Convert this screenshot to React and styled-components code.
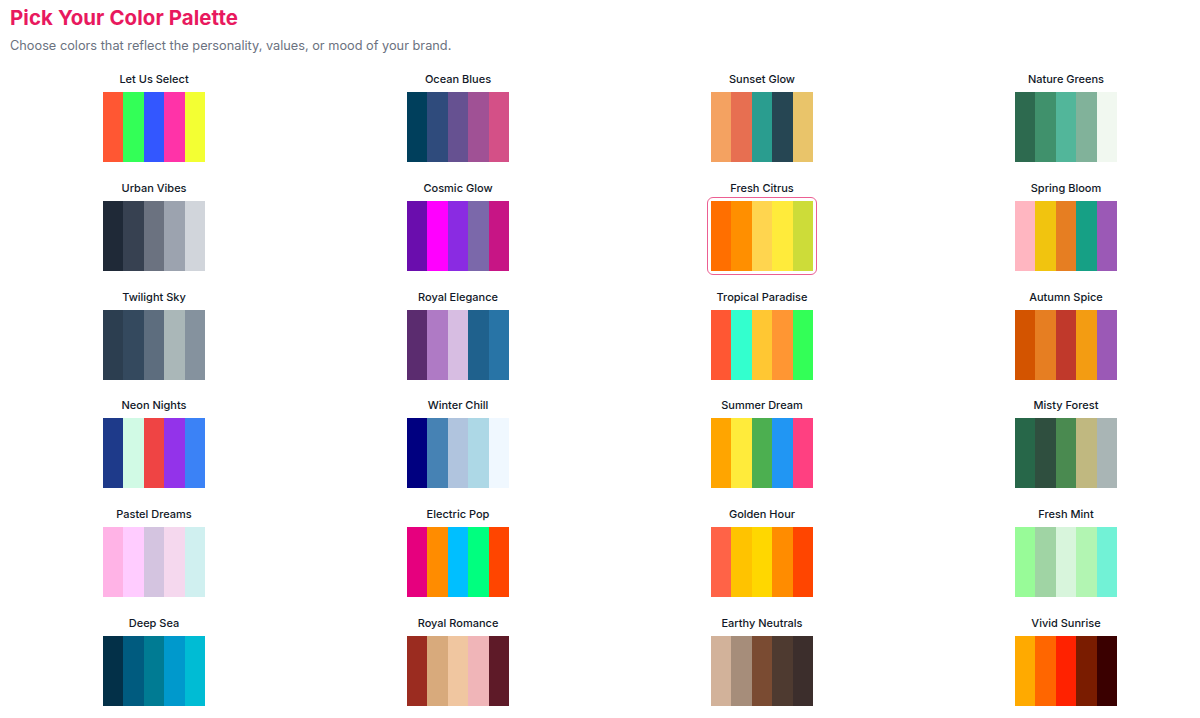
import React, { useState } from "react";
import styled, { createGlobalStyle } from "styled-components";

const GlobalStyle = createGlobalStyle`
  html, body { margin: 0; padding: 0; background: #ffffff; overflow-x: hidden; }
  body { font-family: Inter, "Noto Sans", "Liberation Sans", sans-serif; }
  * { box-sizing: border-box; }
`;

const palettes = [
  { name: "Let Us Select", colors: ["#FF5733", "#33FF57", "#3357FF", "#FF33A8", "#F3FF33"] },
  { name: "Ocean Blues", colors: ["#003F5C", "#2F4B7C", "#665191", "#A05195", "#D45087"] },
  { name: "Sunset Glow", colors: ["#F4A261", "#E76F51", "#2A9D8F", "#264653", "#E9C46A"] },
  { name: "Nature Greens", colors: ["#2D6A4F", "#40916C", "#52B69A", "#81B29A", "#F1F8F0"] },
  { name: "Urban Vibes", colors: ["#1F2937", "#374151", "#6B7280", "#9CA3AF", "#D1D5DB"] },
  { name: "Cosmic Glow", colors: ["#6A0DAD", "#FF00FF", "#8A2BE2", "#7B68AA", "#C71585"] },
  { name: "Fresh Citrus", colors: ["#FF6F00", "#FF8F00", "#FFD54F", "#FFEB3B", "#CDDC39"] },
  { name: "Spring Bloom", colors: ["#FFB6C1", "#F1C40F", "#E67E22", "#16A085", "#9B59B6"] },
  { name: "Twilight Sky", colors: ["#2C3E50", "#34495E", "#5D6D7E", "#AAB7B8", "#85929E"] },
  { name: "Royal Elegance", colors: ["#5B2C6F", "#AF7AC5", "#D7BDE2", "#1F618D", "#2874A6"] },
  { name: "Tropical Paradise", colors: ["#FF5733", "#33FFCE", "#FFC733", "#FF9633", "#33FF57"] },
  { name: "Autumn Spice", colors: ["#D35400", "#E67E22", "#C0392B", "#F39C12", "#9B59B6"] },
  { name: "Neon Nights", colors: ["#1E3A8A", "#D1FAE5", "#EF4444", "#9333EA", "#3B82F6"] },
  { name: "Winter Chill", colors: ["#000080", "#4682B4", "#B0C4DE", "#ADD8E6", "#F0F8FF"] },
  { name: "Summer Dream", colors: ["#FFA500", "#FFEB3B", "#4CAF50", "#2196F3", "#FF4081"] },
  { name: "Misty Forest", colors: ["#276749", "#2F4F3F", "#4A8A50", "#C0B880", "#A9B5B5"] },
  { name: "Pastel Dreams", colors: ["#FFB3E6", "#FFCCFF", "#D4C4E0", "#F5D8EE", "#D0F0F0"] },
  { name: "Electric Pop", colors: ["#E6007E", "#FF8C00", "#00BFFF", "#00FF7F", "#FF4500"] },
  { name: "Golden Hour", colors: ["#FF6347", "#FFC300", "#FFD700", "#FF8C00", "#FF4500"] },
  { name: "Fresh Mint", colors: ["#98FB98", "#A0D4A4", "#D8F5DC", "#B2F5B2", "#72F2D6"] },
  { name: "Deep Sea", colors: ["#033048", "#005B7F", "#007B93", "#0099CC", "#00BCD4"] },
  { name: "Royal Romance", colors: ["#9B2C20", "#D8AA7C", "#F0C6A0", "#F0B5B8", "#5E1A28"] },
  { name: "Earthy Neutrals", colors: ["#D2B29A", "#A68D7A", "#7A4B32", "#4E3A30", "#3C2E2C"] },
  { name: "Vivid Sunrise", colors: ["#FFAA00", "#FF6600", "#FF2200", "#7A1C00", "#3A0000"] },
];

const Page = styled.div`
  padding: 5px 0 0 10px;
`;

const Title = styled.h1`
  margin: 0;
  font-size: 20.4px;
  line-height: 26px;
  font-weight: 700;
  color: #e8195e;
  letter-spacing: 0.1px;
`;

const Subtitle = styled.p`
  margin: 6px 0 0;
  font-size: 12.75px;
  line-height: 18px;
  color: #6b7280;
`;

const Grid = styled.div`
  display: grid;
  grid-template-columns: repeat(4, 288px);
  column-gap: 16px;
  row-gap: 14.8px;
  margin-top: 17px;
`;

const Card = styled.div`
  display: flex;
  flex-direction: column;
  align-items: center;
  gap: 2px;
  cursor: pointer;
`;

const Label = styled.div`
  font-size: 11px;
  line-height: 14px;
  font-weight: 500;
  color: #111827;
`;

const Frame = styled.div`
  padding: 3px;
  border: 1px solid ${(p) => (p.$selected ? "#ec5e92" : "transparent")};
  border-radius: 6px;
`;

const Swatch = styled.div`
  display: flex;
  width: 102px;
  height: 70px;
`;

const Stripe = styled.div`
  flex: 1;
  background: ${(p) => p.$color};
`;

export default function App() {
  const [selected, setSelected] = useState("Fresh Citrus");
  return (
    <Page>
      <GlobalStyle />
      <Title>Pick Your Color Palette</Title>
      <Subtitle>Choose colors that reflect the personality, values, or mood of your brand.</Subtitle>
      <Grid>
        {palettes.map((p) => (
          <Card key={p.name} onClick={() => setSelected(p.name)}>
            <Label>{p.name}</Label>
            <Frame $selected={selected === p.name}>
              <Swatch>
                {p.colors.map((c, i) => (
                  <Stripe key={i} $color={c} />
                ))}
              </Swatch>
            </Frame>
          </Card>
        ))}
      </Grid>
    </Page>
  );
}
